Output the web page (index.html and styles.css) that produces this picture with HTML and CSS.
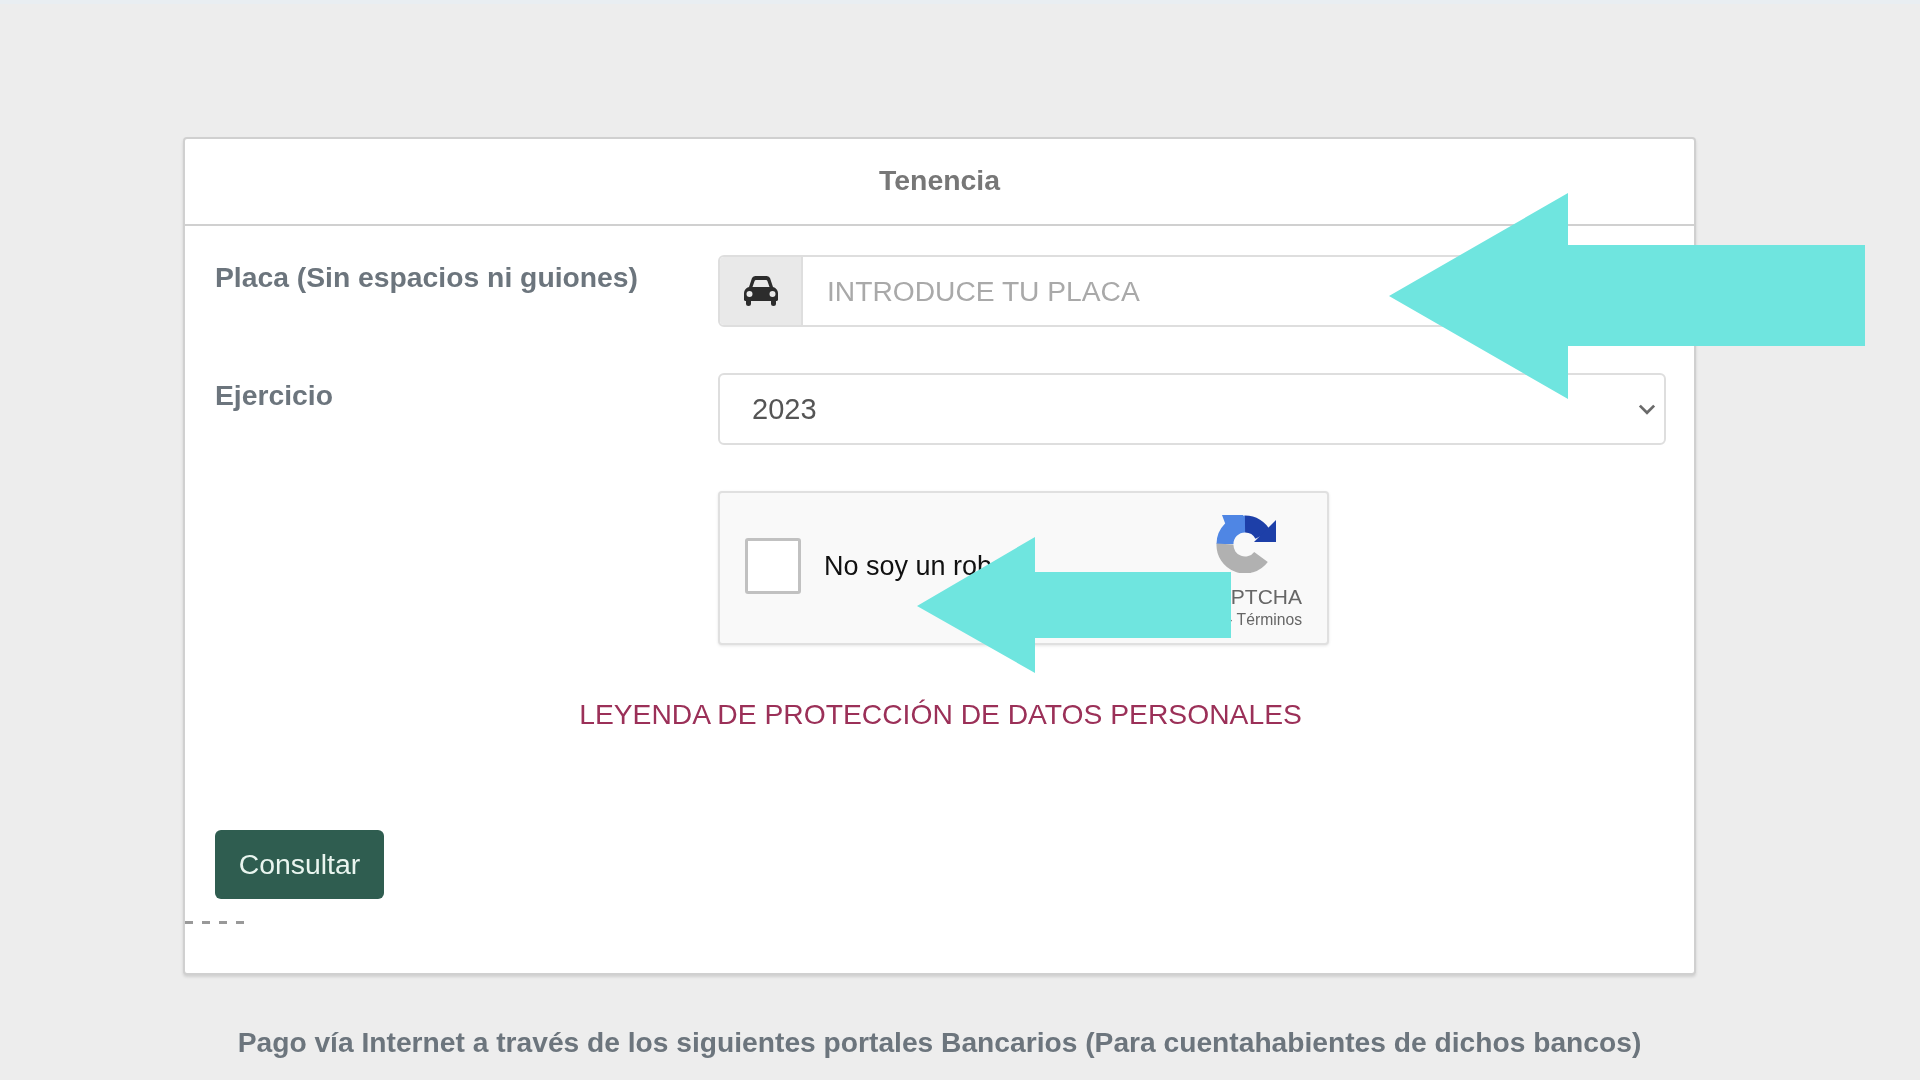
FILE: index.html
```html
<!DOCTYPE html>
<html lang="es">
<head>
<meta charset="UTF-8"/>
<title>Tenencia</title>
<link rel="stylesheet" href="styles.css">
</head>
<body>
<div class="top-strip"></div>
<main class="page">

<section class="card">
<header class="card-head"><h2>Tenencia</h2></header>
<div class="card-body">

<form class="form">
<div class="row">
    <label for="placa">Placa (Sin espacios ni guiones)</label>
    <div class="input-group">
        <span class="addon">
            <svg class="car" viewBox="0 0 34 30"><path fill-rule="evenodd" d="M8 2C9 .7 10 0 11.500 0h11c1.500 0 2.500.7 3.500 2l3 9c2.800.8 5 3 5 6v6.500c0 .9-.6 1.500-1.500 1.500H32v2.500a2.500 2.500 0 0 1-5 0V25H7v2.500a2.500 2.500 0 0 1-5 0V25h-.5C.6 25 0 24.400 0 23.500V17c0-3 2.200-5.200 5-6zM12 4c-.7 0-1.200.4-1.400 1L8.500 11h17l-2.100-6c-.2-.6-.7-1-1.400-1zM5.500 15a3 3 0 1 0 0 6 3 3 0 0 0 0-6zM28.500 15a3 3 0 1 0 0 6 3 3 0 0 0 0-6z"/></svg>
        </span>
        <input id="placa" type="text" placeholder="INTRODUCE TU PLACA">
    </div>
</div>

<div class="row">
    <label for="ejercicio">Ejercicio</label>
    <div class="select-box">
        <span id="ejercicio">2023</span>
        <svg class="chevron" viewBox="0 0 16 10"><path d="M1.500 1.500 8 8l6.500-6.500" fill="none" stroke="#6a6a6a" stroke-width="2.500"/></svg>
    </div>
</div>

<div class="row">
    <div></div>
    <div class="captcha">
        <span class="captcha-check"></span>
        <span class="captcha-text">No soy un robot</span>
        <div class="captcha-brand">
            <svg class="captcha-logo" viewBox="0 0 62 58">
                <path d="M10 29A20 20 0 0 1 30 9" fill="none" stroke="#4f86e4" stroke-width="17"/>
                <path d="M7 0h21v16H13z" fill="#4f86e4"/>
                <path d="M30 9A20 20 0 0 1 48 20" fill="none" stroke="#1d3fa8" stroke-width="17"/>
                <path d="M61 5v22H39z" fill="#1d3fa8"/>
                <path d="M10 29A20 20 0 0 0 46 42" fill="none" stroke="#b1b1b1" stroke-width="17"/>
            </svg>
            <span class="captcha-name">reCAPTCHA</span>
            <span class="captcha-links">Privacidad - Términos</span>
        </div>
    </div>
</div>

<p class="legend">LEYENDA DE PROTECCIÓN DE DATOS PERSONALES</p>

<button type="button" class="btn">Consultar</button>
</form>

<div class="dashes"></div>

</div>
</section>

<p class="bancos">Pago vía Internet a través de los siguientes portales Bancarios (Para cuentahabientes de dichos bancos)</p>

</main>

<svg class="arrow arrow-one" viewBox="0 0 476 206"><path d="M0 103 179 0v52h297v101H179v53z"/></svg>
<svg class="arrow arrow-two" viewBox="0 0 314 136"><path d="M0 69 118 0v35h196v66H118v35z"/></svg>

</body>
</html>
```

FILE: styles.css
```css
html, body
{
width:100%;
height:100%;
margin:0;
padding:0;
overflow:hidden;
}

body
{
background:#ededed;
font-family:"Liberation Sans", Arial, sans-serif;
color:#6c757d;
}

.top-strip
{
height:4px;
background:#e9eef2;
}

.page
{
width:1513px;
margin-left:183px;
padding-top:133px;
filter:blur(0.7px);
}

.card
{
height:838px;
box-sizing:border-box;
background:#fff;
border:2px solid #d0d0d0;
border-radius:4px;
box-shadow:0 2px 3px rgba(0,0,0,0.12);
}

.card-head
{
height:87px;
padding-bottom:2px;
box-sizing:border-box;
border-bottom:2px solid #d0d0d0;
display:flex;
align-items:center;
justify-content:center;
}

.card-head h2
{
margin:0;
font-size:28.4px;
font-weight:bold;
color:#777;
}

.card-body
{
padding:29px 28px 0 30px;
}

.row
{
display:grid;
grid-template-columns:503px 1fr;
margin-bottom:46px;
}

.row label
{
font-size:28.3px;
font-weight:bold;
line-height:40px;
padding-top:2px;
}

.input-group
{
display:flex;
height:72px;
box-sizing:border-box;
border:2px solid #dedede;
border-radius:6px;
overflow:hidden;
}

.addon
{
width:81px;
flex:none;
background:#e9e9e9;
border-right:2px solid #dedede;
display:flex;
align-items:center;
justify-content:center;
}

.car
{
width:34px;
height:30px;
fill:#2c2c2c;
}

.input-group input
{
flex:1;
border:0;
outline:0;
padding:0 24px;
font-family:inherit;
font-size:28.2px;
}

.input-group input::placeholder
{
color:#a9a9a9;
opacity:1;
}

.select-box
{
height:72px;
box-sizing:border-box;
border:2px solid #dedede;
border-radius:6px;
padding:0 8px 0 32px;
display:flex;
align-items:center;
justify-content:space-between;
font-size:29px;
color:#555;
}

.chevron
{
width:18px;
height:11px;
}

.captcha
{
width:611px;
height:154px;
box-sizing:border-box;
background:#f9f9f9;
border:2px solid #e0e0e0;
border-radius:4px;
box-shadow:0 1px 3px rgba(0,0,0,0.1);
padding:0 25px 0 25px;
display:flex;
align-items:center;
}

.captcha-check
{
width:56px;
height:56px;
box-sizing:border-box;
flex:none;
background:#fff;
border:3px solid #c1c1c1;
border-radius:3px;
margin-right:23px;
margin-top:-5px;
}

.captcha-text
{
font-size:27px;
color:#111;
flex:1;
margin-top:-3px;
}

.captcha-brand
{
display:flex;
flex-direction:column;
align-items:flex-end;
color:#666;
margin-top:9px;
}

.captcha-logo
{
width:62px;
height:58px;
margin-right:25px;
margin-bottom:12px;
}

.captcha-name
{
font-size:21px;
line-height:24px;
}

.captcha-links
{
font-size:15.700px;
line-height:22px;
margin-top:0;
}

.legend
{
margin:49px 0 0 0;
text-align:center;
font-size:28.250px;
line-height:40px;
color:#9b3058;
}

.btn
{
display:block;
width:169px;
height:69px;
margin-top:96px;
border:0;
border-radius:6px;
background:#2f5d50;
color:#e9f5ef;
font-family:inherit;
font-size:28.4px;
padding:0;
}

.dashes
{
width:62px;
height:3px;
margin:22px 0 0 -30px;
background:repeating-linear-gradient(90deg, #999 0, #999 8px, transparent 8px, transparent 17px);
}

.bancos
{
margin:47px 0 0 0;
text-align:center;
font-size:28.2px;
font-weight:bold;
line-height:40px;
color:#6c757d;
}

.arrow
{
position:absolute;
fill:#6fe5df;
}

.arrow-one
{
left:1389px;
top:193px;
width:476px;
height:206px;
}

.arrow-two
{
left:917px;
top:537px;
width:314px;
height:136px;
}
```
